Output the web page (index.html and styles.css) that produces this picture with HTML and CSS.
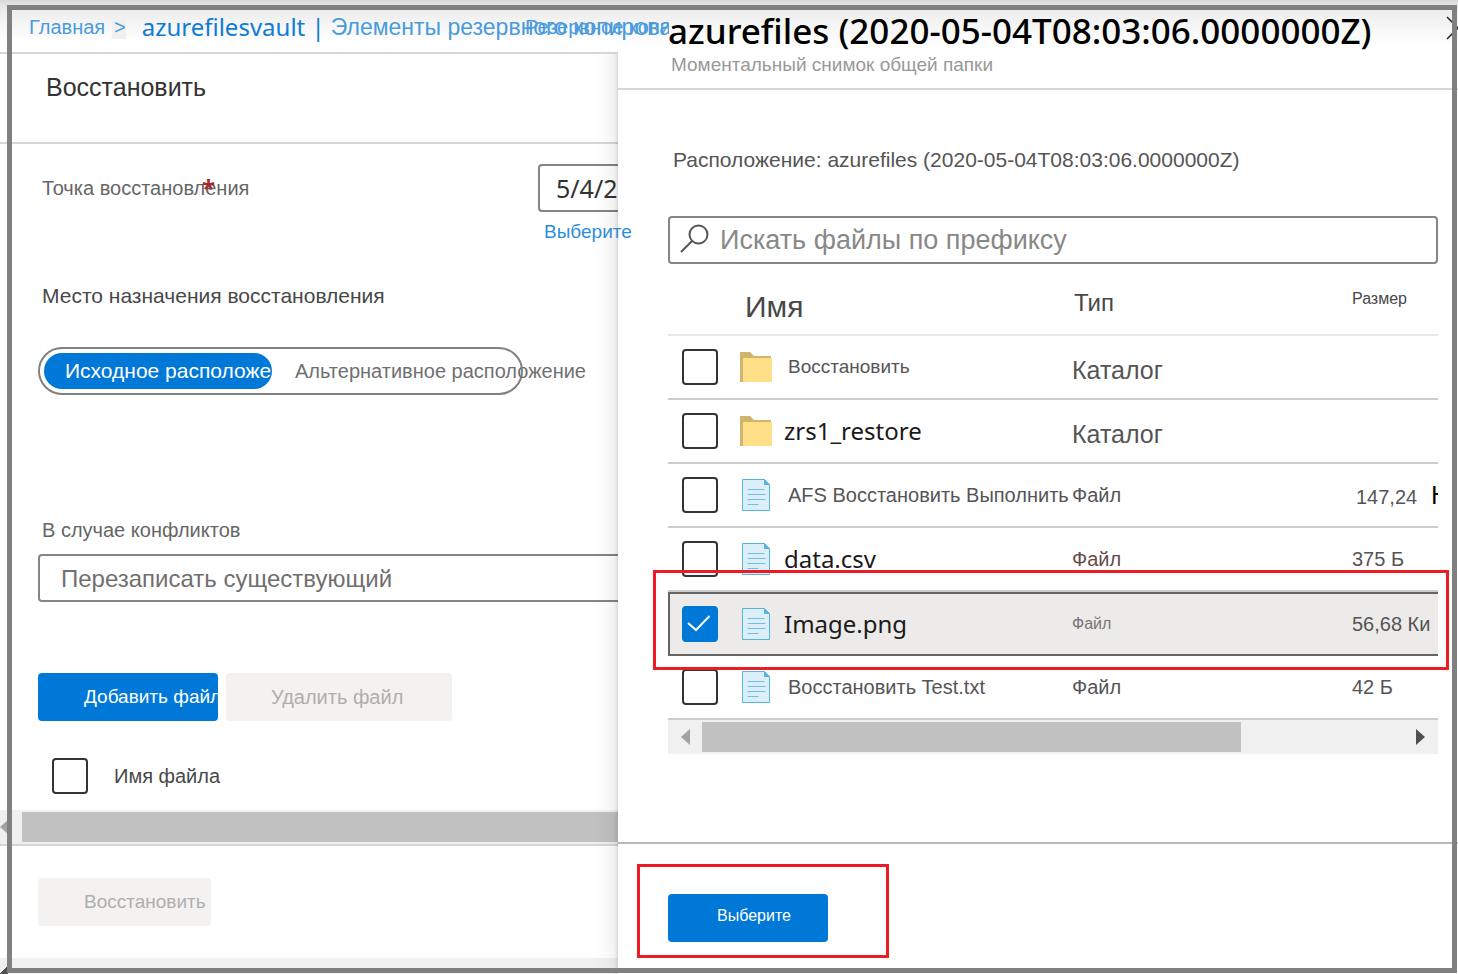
FILE: index.html
```html
<!DOCTYPE html>
<html lang="ru">
<head>
<meta charset="utf-8">
<title>Восстановить</title>
<link rel="stylesheet" href="styles.css">
</head>
<body>
<svg class="defs" aria-hidden="true">
  <symbol id="folder" viewBox="0 0 32 32">
    <path d="M0 1h10l4 4h17v26H0z" fill="#d0b56c"/>
    <path d="M3 7h29v24H3z" fill="#ffdf87"/>
  </symbol>
  <symbol id="file" viewBox="0 0 32 32">
    <path d="M2.500 .5h22l5 5v26h-27z" fill="#dceff8" stroke="#57b4da"/>
    <path d="M24 0v6h6z" fill="#57b4da"/>
    <path d="M8 10.500h16M8 15.500h17M8 20.500h17M8 25.500h10" stroke="#6fc0e2" stroke-linecap="round" fill="none"/>
  </symbol>
</svg>
<div class="app">
  <main class="pane">
    <nav class="crumbs" aria-label="Путь">
      <a class="crumb-home" href="#">Главная</a><span class="crumb-sep">&gt;</span>
      <a class="crumb-vault" href="#">azurefilesvault |</a>
      <a class="crumb-items" href="#">Элементы резервного копирования</a>
      <a class="crumb-backup" href="#">Резервное копирование</a>
    </nav>
    <header class="title-bar"><h1>Восстановить</h1></header>
    <form class="restore">
      <div class="point-row">
        <label class="label" for="point">Точка восстановления<span class="required">*</span></label>
        <div class="point-field">
          <input id="point" class="box" type="text" value="5/4/2020">
          <a class="pick" href="#">Выберите</a>
        </div>
      </div>
      <fieldset class="target">
        <legend>Место назначения восстановления</legend>
        <div class="pill">
          <label class="option chosen"><input type="radio" name="target" checked>Исходное расположение</label>
          <label class="option"><input type="radio" name="target">Альтернативное расположение</label>
        </div>
      </fieldset>
      <div class="conflict">
        <label class="label" for="conflict">В случае конфликтов</label>
        <select id="conflict" class="box"><option>Перезаписать существующий</option></select>
      </div>
      <div class="actions">
        <button type="button" class="btn primary add">Добавить файл</button>
        <button type="button" class="btn remove" disabled>Удалить файл</button>
      </div>
      <label class="file-head"><input class="check" type="checkbox">Имя файла</label>
    </form>
    <div class="scroll left-scroll"><span class="arrow prev"></span><span class="thumb"></span></div>
    <footer class="pane-foot"><button type="button" class="btn restore-btn" disabled>Восстановить</button></footer>
    <div class="strip"></div>
  </main>

  <section class="blade" aria-labelledby="blade-title">
    <header class="blade-head">
      <h2 id="blade-title">azurefiles (2020-05-04T08:03:06.0000000Z)</h2>
      <p>Моментальный снимок общей папки</p>
      <button type="button" class="close" aria-label="Закрыть"><svg viewBox="0 0 24 24"><path d="M1 1l22 22M23 1L1 23"/></svg></button>
    </header>
    <div class="blade-body">
      <p class="location">Расположение: azurefiles (2020-05-04T08:03:06.0000000Z)</p>
      <div class="search">
        <svg viewBox="0 0 30 30"><circle cx="18.500" cy="9.500" r="9"/><path d="M12 16L1 27"/></svg>
        <input type="search" aria-label="Поиск" placeholder="Искать файлы по префиксу">
      </div>
      <table>
        <colgroup><col class="c-check"><col class="c-name"><col class="c-type"><col></colgroup>
        <thead><tr><th></th><th class="h-name">Имя</th><th class="h-type">Тип</th><th class="h-size">Размер</th></tr></thead>
        <tbody>
          <tr><td><input class="check" type="checkbox" aria-label="Восстановить"></td><td><div class="name"><svg><use href="#folder"/></svg><span class="t-narrow">Восстановить</span></div></td><td class="t-large">Каталог</td><td></td></tr>
          <tr><td><input class="check" type="checkbox" aria-label="zrs1_restore"></td><td><div class="name"><svg><use href="#folder"/></svg><span class="t-latin">zrs1_restore</span></div></td><td class="t-large">Каталог</td><td></td></tr>
          <tr><td><input class="check" type="checkbox" aria-label="AFS Восстановить Выполнить"></td><td><div class="name"><svg><use href="#file"/></svg><span class="t-ru">AFS Восстановить Выполнить</span></div></td><td>Файл</td><td class="size wide">147,24 <b>К</b></td></tr>
          <tr><td><input class="check" type="checkbox" aria-label="data.csv"></td><td><div class="name"><svg><use href="#file"/></svg><span class="t-latin">data.csv</span></div></td><td class="t-brown">Файл</td><td class="size">375 Б</td></tr>
          <tr class="selected"><td><input class="check" type="checkbox" aria-label="Image.png" checked><span class="highlight"></span></td><td><div class="name"><svg><use href="#file"/></svg><span class="t-latin">Image.png</span></div></td><td class="t-small">Файл</td><td class="size">56,68 Ки</td></tr>
          <tr><td><input class="check" type="checkbox" aria-label="Восстановить Test.txt"></td><td><div class="name"><svg><use href="#file"/></svg><span class="t-ru">Восстановить Test.txt</span></div></td><td>Файл</td><td class="size">42 Б</td></tr>
        </tbody>
      </table>
      <div class="scroll blade-scroll"><span class="arrow prev"></span><span class="thumb"></span><span class="arrow next"></span></div>
    </div>
    <footer class="blade-foot"><div class="callout"><button type="button" class="btn primary select-btn">Выберите</button></div></footer>
  </section>
</div>
<div class="frame"></div>
</body>
</html>
```
FILE: styles.css
```css
* { box-sizing: border-box; }
body {
  margin: 0;
  font: 20px/24px "Liberation Sans", Arial, sans-serif;
  color: #555;
  background: #fff;
}
h1, h2, p { margin: 0; font-weight: 400; }
a { color: #4a9bdc; text-decoration: none; }
button, input, select { font: inherit; margin: 0; }
.defs { position: absolute; width: 0; height: 0; }

.app {
  display: grid;
  grid-template-columns: 618fr 840fr;
  min-height: 100vh;
  overflow: hidden;
}
.frame {
  position: fixed;
  inset: 5px 1px 1px 7px;
  border: 5px solid #808080;
  pointer-events: none;
  z-index: 5;
}

/* Left pane */
.pane { display: flex; flex-direction: column; min-width: 0; }
.crumbs {
  position: relative;
  z-index: 2;
  display: flex;
  align-items: center;
  height: 54px;
  margin-right: -51px;
  padding-left: 29px;
  white-space: nowrap;
  overflow: hidden;
}
.crumbs::before {
  content: "";
  position: absolute;
  z-index: -1;
  inset: 0 51px 0 0;
  border-bottom: 2px solid #d6d6d6;
  background: linear-gradient(#d9d9d9, #ededed 10px, #fff 42px);
}
.crumb-home { width: 76px; }
.crumb-sep { width: 19px; margin: 0 9px 0 7px; padding-left: 2px; background: #f0f0f0; color: #4a9bdc; }
.crumb-vault { margin-left: 7px; color: #0f7cd4; font: 24px/32px "Noto Sans", sans-serif; }
.crumb-items { margin-left: 6px; font-size: 23px; }
.crumb-backup { position: absolute; left: 525px; top: 15px; }
.title-bar { height: 90px; padding: 18px 46px; border-bottom: 2px solid #d6d6d6; }
.title-bar h1 { font-size: 25px; line-height: 30px; color: #333; }
.restore { flex: 1; padding: 20px 0 16px 38px; }
.point-row { display: flex; }
.label { position: relative; color: #666; white-space: nowrap; }
.point-row .label { width: 500px; padding: 12px 4px; }
.required { position: absolute; left: 164px; top: 8px; color: #a4262c; font: bold 24px/32px "Noto Sans", sans-serif; }
.point-field { flex: 1; min-width: 0; }
.box {
  display: block;
  width: 100%;
  height: 48px;
  border: 2px solid #858585;
  border-radius: 4px;
  background: #fff;
}
.point-field .box { width: calc(100% + 80px); padding: 0 16px; font: 25px/32px "Noto Sans", sans-serif; color: #333; }
.pick { position: relative; z-index: 2; display: inline-block; padding: 8px 6px; font-size: 19px; color: #2f8dd8; }
.target { min-width: 0; margin: 32px 0 0; padding: 0; border: 0; }
.target legend { padding: 0 4px; font-size: 21px; color: #484848; }
.pill {
  display: flex;
  align-items: center;
  gap: 23px;
  width: 485px;
  height: 48px;
  margin-top: 39px;
  padding: 4px;
  border: 2px solid #808080;
  border-radius: 24px;
}
.option { position: relative; z-index: 2; white-space: nowrap; color: #707070; }
.option input { position: absolute; opacity: 0; }
.chosen { flex: 0 0 228px; height: 36px; padding: 6px 0 6px 21px; border-radius: 18px; background: #0078d7; color: #fff; font-size: 21px; overflow: hidden; }
.conflict { margin-top: 123px; }
.conflict .label { display: block; padding: 0 4px; }
.conflict .box { width: calc(100% + 20px); margin-top: 12px; padding: 2px 21px 0; appearance: none; font-size: 24px; line-height: 32px; color: #707070; }
.actions { display: flex; gap: 8px; margin-top: 71px; }
.btn { height: 48px; border: 0; border-radius: 4px; padding: 0; text-align: left; white-space: nowrap; overflow: hidden; background: #f3f2f1; color: #b0aeac; }
.primary { background: #0078d7; color: #fff; }
.add { width: 180px; padding-left: 46px; }
.remove { width: 226px; padding-left: 45px; }
.restore-btn { width: 173px; padding-left: 46px; }
.add, .restore-btn { font-size: 19px; }
.file-head { display: flex; align-items: center; gap: 26px; margin-top: 37px; padding-left: 14px; color: #484848; }
.check {
  display: block;
  flex: none;
  width: 36px;
  height: 36px;
  appearance: none;
  border: 2px solid #333;
  border-radius: 4px;
  background: #fff;
}
.check:checked {
  border: 0;
  background: #0078d7 url("data:image/svg+xml,%3Csvg xmlns='http://www.w3.org/2000/svg' viewBox='0 0 36 36'%3E%3Cpath d='M6 17l8 7L27.500 10' fill='none' stroke='white' stroke-width='2'/%3E%3C/svg%3E");
}
.scroll { display: flex; align-items: center; height: 34px; padding: 2px 0; background: #f0f0f0; }
.thumb { height: 30px; background: #c1c1c1; }
.arrow { width: 9px; height: 16px; background: #a3a3a3; }
.prev { clip-path: polygon(100% 0, 100% 100%, 0 50%); }
.next { clip-path: polygon(0 0, 0 100%, 100% 50%); background: #505050; }
.left-scroll .arrow { margin-right: 13px; }
.left-scroll .thumb { flex: 1; }
.pane-foot { height: 114px; padding: 32px 38px; border-top: 2px solid #d6d6d6; }
.strip { height: 16px; background: linear-gradient(135deg, transparent 50%, #505050 50%) 0 100% / 8px 8px no-repeat #f0f0f0; }

/* Right blade */
.blade {
  position: relative;
  z-index: 1;
  display: flex;
  flex-direction: column;
  min-width: 0;
  background: #fff;
  box-shadow: 0 0 5px rgba(0, 0, 0, .2), 0 0 26px rgba(0, 0, 0, .12);
}
.blade-head {
  position: relative;
  height: 90px;
  padding: 8px 0 0 50px;
  border-bottom: 2px solid #d6d6d6;
  background: linear-gradient(#d9d9d9, #ededed 10px, #fff 46px);
  white-space: nowrap;
}
.blade-head h2 { font: 500 35px/45px "Noto Sans", sans-serif; color: #000; }
.blade-head p { padding-left: 3px; font-size: 19px; color: #999; }
.close { position: absolute; right: -12px; top: 16px; width: 24px; height: 24px; padding: 0; border: 0; background: none; }
.close svg { display: block; fill: none; stroke: #222; stroke-width: 1.5; }
.blade-body { flex: 1; padding: 58px 20px 88px 50px; }
.location { padding: 0 5px; font-size: 21px; white-space: nowrap; }
.search {
  display: flex;
  align-items: center;
  gap: 10px;
  height: 48px;
  margin-top: 44px;
  padding: 0 10px;
  border: 2px solid #858585;
  border-radius: 4px;
}
.search svg { width: 30px; height: 30px; fill: none; stroke: #555; stroke-width: 2; overflow: visible; }
.search input { flex: 1; min-width: 0; padding: 0; border: 0; outline: 0; background: none; font-size: 27px; line-height: 32px; }
.search input::placeholder { color: #888; }
table { width: 100%; table-layout: fixed; border-collapse: separate; border-spacing: 0; }
.c-check { width: 56px; }
.c-name { width: 348px; }
.c-type { width: 280px; }
th { height: 72px; padding: 0; border-bottom: 2px solid #e8e8e8; text-align: left; font-weight: 400; color: #484848; }
.h-name { padding: 16px 0 0 21px; font-size: 30px; }
.h-type { padding: 8px 0 0 2px; font-size: 24px; }
.h-size { font-size: 16px; }
td { height: 64px; padding: 0; border-bottom: 2px solid #ccc; white-space: nowrap; }
td .check { margin-left: 14px; }
.size { overflow: hidden; }
.wide { padding-left: 4px; text-overflow: clip; }
.size b { padding-left: 8px; color: #000; font: 25px/24px "Noto Sans", sans-serif; }
.name { display: flex; align-items: center; gap: 12px; padding-left: 16px; }
.name svg { flex: none; width: 32px; height: 32px; }
.t-narrow { padding-left: 4px; font-size: 19px; }
.t-ru { padding-left: 4px; }
.t-latin { color: #1a1a1a; font: 24px/32px "Noto Sans", sans-serif; }
.t-large { padding-top: 6px; font-size: 25px; }
.t-brown { color: #664a4a; }
.t-small { font-size: 16px; color: #777; }
.selected { position: relative; }
.selected td { border-top: 2px solid #666; border-bottom-color: #666; background: #ecebe9; }
.selected td:first-child { border-left: 2px solid #666; }
.selected .check { margin-left: 12px; }
.highlight { position: absolute; inset: -22px -11px -14px -15px; border: 3px solid #ed1c24; pointer-events: none; }
.blade-scroll .arrow { margin: 0 13px; }
.blade-scroll .prev { margin-right: 12px; }
.blade-scroll .thumb { flex: 0 0 70%; }
.blade-scroll .next { margin-left: auto; }
.blade-foot { padding: 20px 19px 16px; border-top: 2px solid #b9b9b9; }
.callout { width: 252px; height: 94px; padding: 27px 28px; border: 3px solid #ed1c24; }
.select-btn { display: block; width: 160px; padding: 0 0 4px 49px; font-size: 16px; }
```
